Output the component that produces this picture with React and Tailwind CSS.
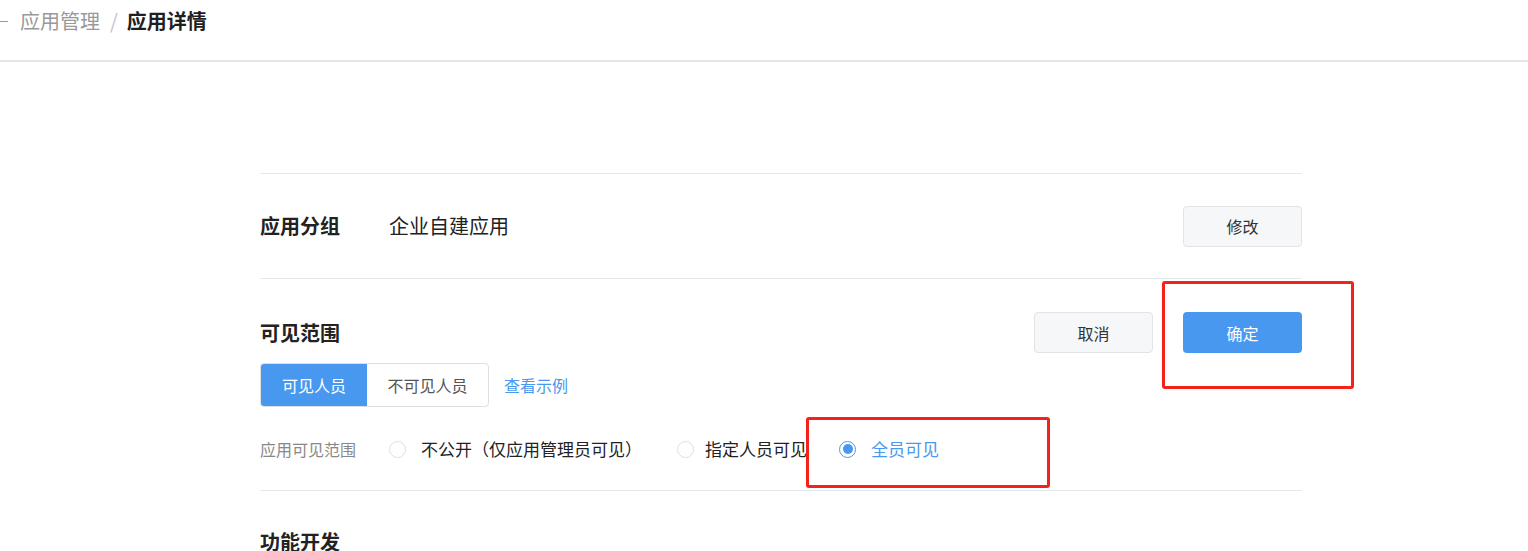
import React, { useState } from 'react';

const font = { fontFamily: '"Noto Sans CJK SC", "Noto Sans", sans-serif' };

function Radio({ checked, label, gap = 'ml-[15px]', className = '' }) {
  return (
    <label className={`flex items-center ${className}`}>
      <span
        className={`w-[17px] h-[17px] rounded-full border flex items-center justify-center ${
          checked ? 'border-[#4898f0]' : 'border-[#dcdfe6]'
        }`}
      >
        {checked && <span className="w-[10px] h-[10px] rounded-full bg-[#4898f0]" />}
      </span>
      <span className={`${gap} text-[17px] ${checked ? 'text-[#4898f0]' : 'text-[#222]'}`}>{label}</span>
    </label>
  );
}

export default function App() {
  const [tab, setTab] = useState('visible');

  return (
    <div className="w-[1528px] h-[551px] bg-white overflow-hidden relative" style={font}>
      {/* 顶部面包屑 */}
      <div className="h-[62px] border-b-2 border-[#e6e6e9] flex items-start">
        <div className="flex items-center h-[42px] text-[20px]">
          <span className="w-2 h-px bg-[#999] mr-3" />
          <span className="text-[#999]">应用管理</span>
          <span className="text-[#c0c4cc] ml-[10px] mr-[9px]">/</span>
          <span className="font-bold text-[#1f1f1f]">应用详情</span>
        </div>
      </div>

      <div className="ml-[260px] w-[1042px] mt-[111px]">
        {/* 应用分组 */}
        <div className="border-t border-[#e4e9ef] h-[105px] flex items-center">
          <div className="w-[129px] text-[20px] font-bold text-[#222]">应用分组</div>
          <div className="flex-1 text-[20px] text-[#222]">企业自建应用</div>
          <button className="w-[119px] h-[41px] rounded border border-[#e1e3e6] bg-[#f6f7f9] text-[16px] text-[#333]">
            修改
          </button>
        </div>

        {/* 可见范围 */}
        <div className="border-t border-[#e4e9ef] pt-[33px] pb-[29px]">
          <div className="flex items-center h-[41px]">
            <div className="flex-1 text-[20px] font-bold text-[#222]">可见范围</div>
            <button className="w-[119px] h-[41px] rounded border border-[#e1e3e6] bg-[#f6f7f9] text-[16px] text-[#333]">
              取消
            </button>
            <button className="w-[119px] h-[41px] ml-[30px] rounded bg-[#4898f0] text-[16px] text-white">
              确定
            </button>
          </div>

          <div className="flex items-center mt-[10px]">
            <div className="flex h-[44px] rounded border border-[#dcdfe6] overflow-hidden text-[16px]">
              <button
                onClick={() => setTab('visible')}
                className={`w-[106px] ${tab === 'visible' ? 'bg-[#4898f0] text-white' : 'text-[#555]'}`}
              >
                可见人员
              </button>
              <button
                onClick={() => setTab('invisible')}
                className={`w-[121px] ${tab === 'invisible' ? 'bg-[#4898f0] text-white' : 'text-[#555]'}`}
              >
                不可见人员
              </button>
            </div>
            <span className="ml-[15px] text-[16px] text-[#4898f0]">查看示例</span>
          </div>

          <div className="flex items-center h-[24px] mt-[30px]">
            <div className="w-[129px] text-[16px] text-[#888]">应用可见范围</div>
            <Radio label="不公开（仅应用管理员可见）" />
            <Radio label="指定人员可见" gap="ml-[11px]" className="ml-[35px]" />
            <Radio label="全员可见" checked className="ml-[32px]" />
          </div>
        </div>

        {/* 功能开发 */}
        <div className="border-t border-[#e4e9ef] pt-[36px]">
          <div className="text-[20px] font-bold text-[#222]">功能开发</div>
        </div>
      </div>

      {/* 标注框 */}
      <div className="absolute left-[1162px] top-[281px] w-[192px] h-[108px] border-[3px] border-[#f5221b] rounded-[3px] pointer-events-none" />
      <div className="absolute left-[806px] top-[417px] w-[244px] h-[71px] border-[3px] border-[#f5221b] rounded-[3px] pointer-events-none" />
    </div>
  );
}
